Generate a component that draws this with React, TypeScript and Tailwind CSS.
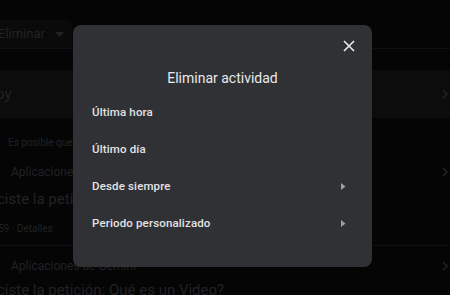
import React from 'react';

const font = { fontFamily: 'Roboto, "Noto Sans", "Liberation Sans", sans-serif' };

const Chevron: React.FC = () => (
  <svg width="8" height="10" viewBox="0 0 8 10" className="text-[#222224]">
    <path d="M2 1l4 4-4 4" fill="none" stroke="currentColor" strokeWidth="1.5" />
  </svg>
);

const Caret: React.FC = () => (
  <svg width="6" height="9" viewBox="0 0 6 9" className="text-[#9aa0a6]">
    <path d="M1 1l4.5 3.5L1 8z" fill="currentColor" />
  </svg>
);

const options: { label: string; more?: boolean }[] = [
  { label: 'Última hora' },
  { label: 'Último día' },
  { label: 'Desde siempre', more: true },
  { label: 'Periodo personalizado', more: true },
];

export default function App() {
  return (
    <div className="relative w-[450px] h-[295px] overflow-hidden bg-[#050506]" style={font}>
      {/* dimmed page behind */}
      <div className="flex flex-col text-[#222224]">
        <div className="h-[20px]" />
        <div className="h-[28px] w-[74px] bg-[#0a0a0b] flex items-center gap-[10px] -ml-[2px] rounded-tr-[6px]">
          <span className="text-[13px]">Eliminar</span>
          <svg width="9" height="5" viewBox="0 0 9 5">
            <path d="M0 0h9L4.5 5z" fill="#222224" />
          </svg>
        </div>
        <div className="h-px bg-[#101012]" />
        <div className="h-[21px]" />
        <div className="h-[48px] bg-[#0c0c0d] flex items-center justify-between pr-[1px]">
          <span className="text-[15px] -ml-[4px]">oy</span>
          <Chevron />
        </div>
        <div className="h-[19px]" />
        <div className="pl-[8px] text-[10px] leading-[12px]">Es posible que</div>
        <div className="h-[20px] flex items-center justify-between pl-[11px] pr-[1px] mt-[13px]">
          <span className="text-[12px]">Aplicaciones</span>
          <Chevron />
        </div>
        <div className="text-[15px] leading-[20px] mt-[7px] -ml-[3px]">ciste la petic</div>
        <div className="text-[10px] leading-[12px] mt-[14px] -ml-[2px]">59 · Detalles</div>
        <div className="h-px bg-[#101012] mt-[10px]" />
        <div className="h-[20px] flex items-center justify-between pl-[11px] pr-[1px] mt-[10px]">
          <span className="text-[12px]">Aplicaciones de Gemini</span>
          <Chevron />
        </div>
        <div className="text-[15px] leading-[20px] mt-[4px] -ml-[3px] whitespace-nowrap">ciste la petición: Qué es un Video?</div>
      </div>

      {/* dialog */}
      <div className="absolute left-[73px] top-[25px] w-[299px] h-[242px] rounded-[8px] bg-[#303134] flex flex-col pt-[14px]">
        <div className="flex justify-end pr-[16px]">
          <svg width="14" height="14" viewBox="0 0 14 14">
            <path d="M2 2l10 10M12 2L2 12" stroke="#e8eaed" strokeWidth="1.6" />
          </svg>
        </div>
        <div className="mt-[15px] text-center text-[14px] leading-[20px] text-[#e8eaed]">Eliminar actividad</div>
        <div className="mt-[6px] flex flex-col">
          {options.map(o => (
            <div key={o.label} className="h-[37px] flex items-center justify-between pl-[19px] pr-[26px]">
              <span className="text-[11.5px] font-medium text-[#e3e3e6] tracking-[0.15px]">{o.label}</span>
              {o.more && <Caret />}
            </div>
          ))}
        </div>
      </div>
    </div>
  );
}
